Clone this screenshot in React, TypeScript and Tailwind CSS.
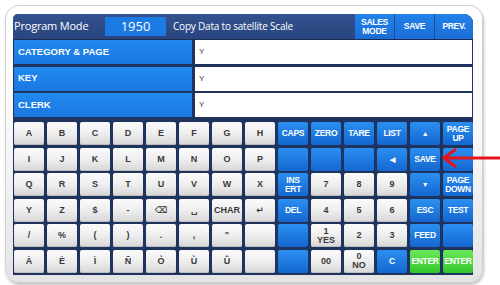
import React from "react";

type K = { t: string; c: "l" | "b" | "g"; sym?: boolean };

const L = (t: string, sym = false): K => ({ t, c: "l", sym });
const B = (t = ""): K => ({ t, c: "b" });
const G = (t: string): K => ({ t, c: "g" });

const rows: K[][] = [
  [L("A"), L("B"), L("C"), L("D"), L("E"), L("F"), L("G"), L("H"), B("CAPS"), B("ZERO"), B("TARE"), B("LIST"), B("▲"), B("PAGE\nUP")],
  [L("I"), L("J"), L("K"), L("L"), L("M"), L("N"), L("O"), L("P"), B(), B(), B(), B("◀"), B("SAVE"), B()],
  [L("Q"), L("R"), L("S"), L("T"), L("U"), L("V"), L("W"), L("X"), B("INS\nERT"), L("7"), L("8"), L("9"), B("▼"), B("PAGE\nDOWN")],
  [L("Y"), L("Z"), L("$"), L("-"), L("⌫", true), L("␣", true), L("CHAR"), L("↵", true), B("DEL"), L("4"), L("5"), L("6"), B("ESC"), B("TEST")],
  [L("/"), L("%"), L("("), L(")"), L("."), L(","), L("\""), L(""), B(), L("1\nYES"), L("2"), L("3"), B("FEED"), B()],
  [L("À"), L("È"), L("Ì"), L("Ñ"), L("Ò"), L("Ù"), L("Û"), L(""), B(), L("00"), L("0\nNO"), B("C"), G("ENTER"), G("ENTER")],
];

function Key({ k }: { k: K }) {
  const base =
    "flex items-center justify-center text-center leading-[9px] rounded-[2px] whitespace-pre";
  if (k.c === "l") {
    return (
      <div
        className={`${base} bg-gradient-to-b from-[#fbfbfb] via-[#eeeeee] to-[#d6d6d6] text-[#3a3a3a] font-bold ${k.sym ? "text-[9px] font-['DejaVu_Sans',sans-serif]" : "text-[9px]"} shadow-[inset_0_-1px_0_#bdbdbd]`}
      >
        {k.t}
      </div>
    );
  }
  if (k.c === "g") {
    return (
      <div
        className={`${base} bg-gradient-to-b from-[#6ae85a] to-[#2fc629] text-white font-bold text-[8.5px] tracking-[-0.4px]`}
      >
        {k.t}
      </div>
    );
  }
  const small = k.t === "▲" || k.t === "▼" || k.t === "◀";
  return (
    <div
      className={`${base} bg-gradient-to-b from-[#2b8ff2] to-[#1567cf] text-white font-bold ${small ? "text-[7px]" : "text-[8.5px]"} tracking-[-0.3px]`}
    >
      {k.t}
    </div>
  );
}

function FieldRow({ label }: { label: string }) {
  return (
    <div className="flex h-[24px]">
      <div className="w-[178px] bg-gradient-to-b from-[#2189ee] to-[#1a78e2] text-white font-bold text-[9.5px] flex items-center pl-[4px]">
        {label}
      </div>
      <div className="ml-[3px] w-[277px] bg-white text-[#333] text-[8px] flex items-center pl-[4px]">
        Y
      </div>
    </div>
  );
}

export default function App() {
  return (
    <div className="w-[500px] h-[285px] bg-white relative overflow-hidden font-['Liberation_Sans',Arial,sans-serif]">
      <div className="ml-[5px] mt-[5px] w-[478px] h-[278px] rounded-[14px] border border-[#cfcfcf] bg-gradient-to-b from-[#ffffff] via-[#f7f7f7] to-[#e4e4e4] shadow-[1px_2px_3px_rgba(0,0,0,0.25)] pt-[8px] pl-[7px]">
        <div className="w-[460px] h-[261px] bg-[#1e335e] rounded-tl-[5px] rounded-tr-[9px] overflow-hidden flex flex-col">
          {/* header */}
          <div className="h-[26px] flex items-stretch bg-gradient-to-b from-[#34528f] to-[#2a457f] border-b border-[#1a2c52]">
            <div className="w-[92px] flex items-center pl-[1px] text-white text-[11px] font-['Open_Sans',sans-serif] tracking-[-0.2px]">
              Program Mode
            </div>
            <div className="flex items-center">
              <div className="w-[61px] h-[19px] bg-[#1c7ae3] text-white text-[13px] font-['Open_Sans',sans-serif] flex items-center justify-center">
                1950
              </div>
            </div>
            <div className="ml-[7px] flex items-center text-white text-[10px] font-['Open_Sans',sans-serif] tracking-[-0.2px]">
              Copy Data to satellite Scale
            </div>
            <div className="flex-1" />
            <div className="w-[40px] bg-gradient-to-b from-[#2381e8] to-[#1a6ed6] border-r border-[#1b4f9c] text-white font-bold text-[8.5px] leading-[9px] flex items-center justify-center text-center whitespace-pre tracking-[-0.3px]">
              {"SALES\nMODE"}
            </div>
            <div className="w-[40px] bg-gradient-to-b from-[#2381e8] to-[#1a6ed6] border-r border-[#1b4f9c] text-white font-bold text-[8.5px] flex items-center justify-center tracking-[-0.3px]">
              SAVE
            </div>
            <div className="w-[38px] bg-gradient-to-b from-[#2381e8] to-[#1a6ed6] text-white font-bold text-[8.5px] flex items-center justify-center tracking-[-0.3px]">
              PREV.
            </div>
          </div>
          {/* fields */}
          <div className="pl-[1px] flex flex-col gap-[2.5px]">
            <FieldRow label="CATEGORY & PAGE" />
            <FieldRow label="KEY" />
            <FieldRow label="CLERK" />
          </div>
          {/* keyboard */}
          <div className="pl-[1px] mt-[5px] grid grid-cols-[repeat(14,30px)] grid-rows-[repeat(6,23px)] gap-x-[3px] gap-y-[2.5px]">
            {rows.flat().map((k, i) => (
              <Key key={i} k={k} />
            ))}
          </div>
        </div>
      </div>
      {/* red arrow annotation */}
      <svg
        className="absolute left-[440px] top-[146px]"
        width="60"
        height="24"
        viewBox="0 0 60 24"
      >
        <line x1="5" y1="12" x2="60" y2="12" stroke="#e5141b" strokeWidth="3" />
        <polyline
          points="16,3 4,12 16,21"
          fill="none"
          stroke="#e5141b"
          strokeWidth="3"
          strokeLinejoin="miter"
        />
      </svg>
    </div>
  );
}
